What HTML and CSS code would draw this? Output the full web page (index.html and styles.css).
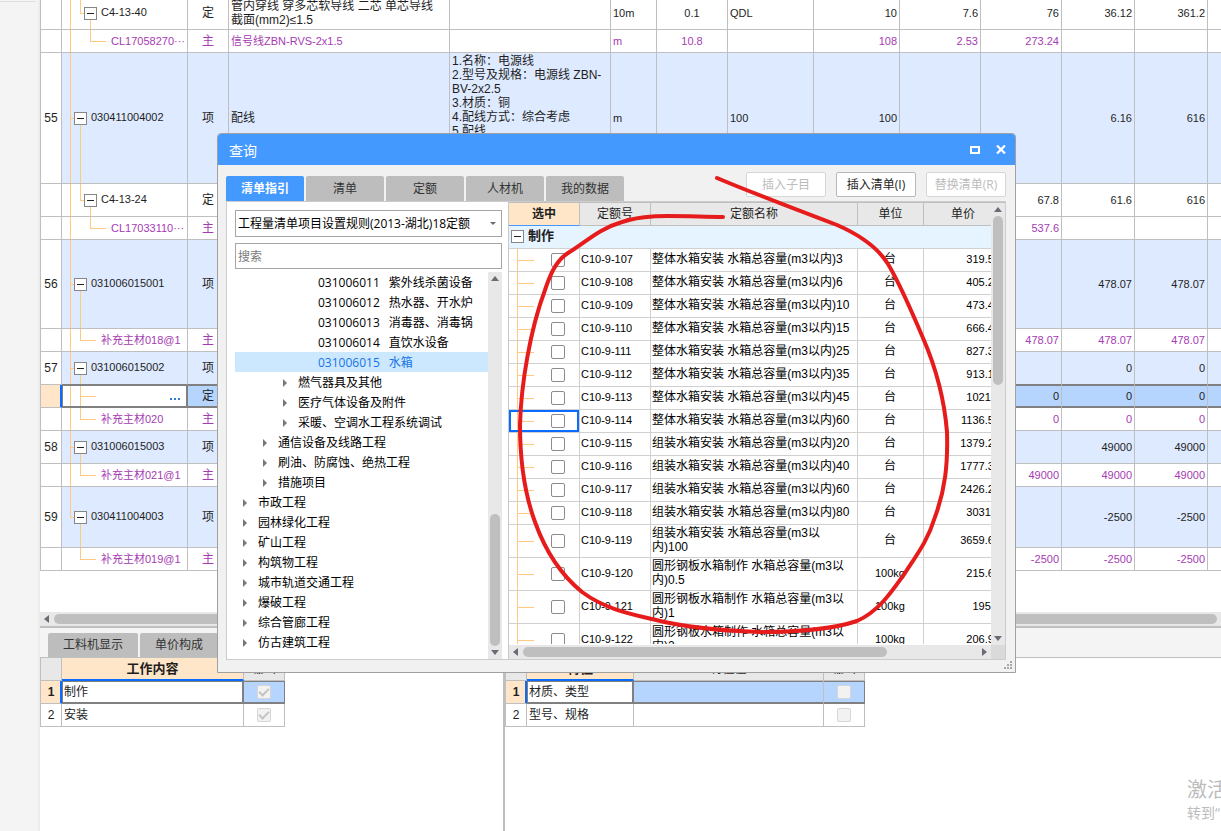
FILE: index.html
```html
<!DOCTYPE html>
<html lang="zh-CN">
<head>
<meta charset="utf-8">
<title>查询</title>
<link rel="stylesheet" href="styles.css">
</head>
<body>
<div class="app">
  <aside class="rail"><hr class="rail-line"></aside>
  <main class="main">
    <section class="bill">
      <table class="grid bill-grid">
        <colgroup><col class="w-no"><col class="w-code"><col class="w-type"><col class="w-name"><col class="w-desc"><col class="w-unit"><col class="w-content"><col class="w-expr"><col class="w-expr"><col class="w-price"><col class="w-price"><col class="w-sum"><col class="w-sum"><col class="w-sum"></colgroup>
        <tbody>
        <tr class="h33"><td class="no"></td><td class="tree n1"><button class="fold" aria-label="折叠"></button>C4-13-40</td><td class="c">定</td><td class="zh">管内穿线 穿多芯软导线 二芯 单芯导线<br>截面(mm2)≤1.5</td><td></td><td>10m</td><td class="c num">0.1</td><td>QDL</td><td class="r">10</td><td class="r">7.6</td><td class="r">76</td><td class="r">36.12</td><td class="r">361.2</td><td></td></tr>
        <tr class="h23 main-mat"><td class="no"></td><td class="tree l2">CL17058270···</td><td class="c">主</td><td>信号线ZBN-RVS-2x1.5</td><td></td><td>m</td><td class="c num">10.8</td><td></td><td class="r">108</td><td class="r">2.53</td><td class="r">273.24</td><td></td><td></td><td></td></tr>
        <tr class="h131 item"><td class="no">55</td><td class="tree n0"><button class="fold" aria-label="折叠"></button>030411004002</td><td class="c">项</td><td class="zh">配线</td><td class="zh top">1.名称：电源线<br>2.型号及规格：电源线 ZBN-<br>BV-2x2.5<br>3.材质：铜<br>4.配线方式：综合考虑<br>5.配线</td><td>m</td><td></td><td>100</td><td class="r">100</td><td></td><td></td><td class="r">6.16</td><td class="r">616</td><td></td></tr>
        <tr class="h33"><td class="no"></td><td class="tree n1"><button class="fold" aria-label="折叠"></button>C4-13-24</td><td class="c">定</td><td></td><td></td><td></td><td></td><td></td><td></td><td></td><td class="r">67.8</td><td class="r">61.6</td><td class="r">616</td><td></td></tr>
        <tr class="h23 main-mat"><td class="no"></td><td class="tree l2">CL17033110···</td><td class="c">主</td><td></td><td></td><td></td><td></td><td></td><td></td><td></td><td class="r">537.6</td><td></td><td></td><td></td></tr>
        <tr class="h89 item"><td class="no">56</td><td class="tree n0"><button class="fold" aria-label="折叠"></button>031006015001</td><td class="c">项</td><td></td><td></td><td></td><td></td><td></td><td></td><td></td><td></td><td class="r">478.07</td><td class="r">478.07</td><td></td></tr>
        <tr class="h23 main-mat"><td class="no"></td><td class="tree l1">补充主材018@1</td><td class="c">主</td><td></td><td></td><td></td><td></td><td></td><td></td><td></td><td class="r">478.07</td><td class="r">478.07</td><td class="r">478.07</td><td></td></tr>
        <tr class="h33 item above"><td class="no">57</td><td class="tree n0"><button class="fold" aria-label="折叠"></button>031006015002</td><td class="c">项</td><td></td><td></td><td></td><td></td><td></td><td></td><td></td><td></td><td class="r">0</td><td class="r">0</td><td></td></tr>
        <tr class="h23 current"><td class="no"></td><td class="tree l1 mid edit"><button class="more" aria-label="更多"><svg width="10" height="2" viewBox="0 0 10 2" fill="#2c7fd0"><path d="M0 0h2v2h-2zM4 0h2v2h-2zM8 0h2v2h-2z"/></svg></button></td><td class="c">定</td><td></td><td></td><td></td><td></td><td></td><td></td><td></td><td class="r">0</td><td class="r">0</td><td class="r">0</td><td></td></tr>
        <tr class="h23 main-mat"><td class="no"></td><td class="tree l1">补充主材020</td><td class="c">主</td><td></td><td></td><td></td><td></td><td></td><td></td><td></td><td class="r">0</td><td class="r">0</td><td class="r">0</td><td></td></tr>
        <tr class="h33 item"><td class="no">58</td><td class="tree n0"><button class="fold" aria-label="折叠"></button>031006015003</td><td class="c">项</td><td></td><td></td><td></td><td></td><td></td><td></td><td></td><td></td><td class="r">49000</td><td class="r">49000</td><td></td></tr>
        <tr class="h23 main-mat"><td class="no"></td><td class="tree l1">补充主材021@1</td><td class="c">主</td><td></td><td></td><td></td><td></td><td></td><td></td><td></td><td class="r">49000</td><td class="r">49000</td><td class="r">49000</td><td></td></tr>
        <tr class="h61 item"><td class="no">59</td><td class="tree n0 last"><button class="fold" aria-label="折叠"></button>030411004003</td><td class="c">项</td><td></td><td></td><td></td><td></td><td></td><td></td><td></td><td></td><td class="r">-2500</td><td class="r">-2500</td><td></td></tr>
        <tr class="h23 main-mat"><td class="no"></td><td class="tree l1 end">补充主材019@1</td><td class="c">主</td><td></td><td></td><td></td><td></td><td></td><td></td><td></td><td class="r">-2500</td><td class="r">-2500</td><td class="r">-2500</td><td></td></tr>
        </tbody>
      </table>
    </section>
    <div class="hbar bill-bar"><i class="arrow left"></i><span class="thumb"></span></div>
    <nav class="sub-tabs"><button class="sub-tab">工料机显示</button><button class="sub-tab">单价构成</button></nav>
    <section class="split">
      <div class="pane work">
        <table class="grid detail">
          <colgroup><col class="w-no"><col class="w-work"><col class="w-out"></colgroup>
          <thead><tr><th></th><th class="active">工作内容</th><th>输出</th></tr></thead>
          <tbody>
          <tr class="picked"><td class="no">1</td><td class="focus">制作</td><td class="c"><input type="checkbox" class="box" aria-label="输出 制作" checked disabled></td></tr>
          <tr><td class="no">2</td><td>安装</td><td class="c"><input type="checkbox" class="box" aria-label="输出 安装" checked disabled></td></tr>
          </tbody>
        </table>
      </div>
      <div class="pane">
        <table class="grid detail">
          <colgroup><col class="w-no"><col class="w-feature"><col class="w-value"><col class="w-out"></colgroup>
          <thead><tr><th></th><th class="active">特征</th><th>特征值</th><th>输出</th></tr></thead>
          <tbody>
          <tr class="picked"><td class="no">1</td><td class="focus">材质、类型</td><td></td><td class="c"><input type="checkbox" class="box" aria-label="输出 材质、类型" disabled></td></tr>
          <tr><td class="no">2</td><td>型号、规格</td><td></td><td class="c"><input type="checkbox" class="box" aria-label="输出 型号、规格" disabled></td></tr>
          </tbody>
        </table>
      </div>
    </section>
  </main>

  <div class="notice"><p class="notice-title">激活</p><p class="notice-text">转到“</p></div>

  <div class="dialog" role="dialog" aria-labelledby="dlg-title">
    <header class="title-bar">
      <h1 id="dlg-title">查询</h1>
      <button class="win-btn" aria-label="最大化"><svg width="10" height="8" viewBox="0 0 10 8"><rect x="1" y="1" width="8" height="6" fill="none" stroke="#fff" stroke-width="2"/></svg></button>
      <button class="win-btn" aria-label="关闭"><svg width="10" height="9" viewBox="0 0 10 9"><path d="M1 0.500L9 8.500M9 0.500L1 8.500" stroke="#fff" stroke-width="2.200"/></svg></button>
    </header>
    <div class="tool-row">
      <nav class="tabs"><button class="tab on">清单指引</button><button class="tab">清单</button><button class="tab">定额</button><button class="tab">人材机</button><button class="tab">我的数据</button></nav>
      <div class="actions"><button class="btn" disabled>插入子目</button><button class="btn">插入清单(I)</button><button class="btn" disabled>替换清单(R)</button></div>
    </div>
    <div class="content">
      <div class="guide">
        <div class="picker"><select aria-label="清单规则"><option>工程量清单项目设置规则(2013-湖北)18定额</option></select><i class="arrow down small"></i></div>
        <input type="text" class="search" placeholder="搜索" aria-label="搜索">
        <div class="tree-box">
          <ul class="nodes">
            <li class="leaf"><span>031006011</span>紫外线杀菌设备</li>
            <li class="leaf"><span>031006012</span>热水器、开水炉</li>
            <li class="leaf"><span>031006013</span>消毒器、消毒锅</li>
            <li class="leaf"><span>031006014</span>直饮水设备</li>
            <li class="leaf chosen"><span>031006015</span>水箱</li>
            <li class="d3"><i class="arrow right"></i>燃气器具及其他</li>
            <li class="d3"><i class="arrow right"></i>医疗气体设备及附件</li>
            <li class="d3"><i class="arrow right"></i>采暖、空调水工程系统调试</li>
            <li class="d2"><i class="arrow right"></i>通信设备及线路工程</li>
            <li class="d2"><i class="arrow right"></i>刷油、防腐蚀、绝热工程</li>
            <li class="d2"><i class="arrow right"></i>措施项目</li>
            <li class="d1"><i class="arrow right"></i>市政工程</li>
            <li class="d1"><i class="arrow right"></i>园林绿化工程</li>
            <li class="d1"><i class="arrow right"></i>矿山工程</li>
            <li class="d1"><i class="arrow right"></i>构筑物工程</li>
            <li class="d1"><i class="arrow right"></i>城市轨道交通工程</li>
            <li class="d1"><i class="arrow right"></i>爆破工程</li>
            <li class="d1"><i class="arrow right"></i>综合管廊工程</li>
            <li class="d1"><i class="arrow right"></i>仿古建筑工程</li>
          </ul>
          <div class="vbar guide-bar"><i class="arrow up"></i><span class="thumb"></span><i class="arrow down"></i></div>
        </div>
      </div>
      <div class="quota">
        <div class="quota-view">
          <table class="grid quota-grid">
            <colgroup><col class="q-pick"><col class="q-code"><col class="q-name"><col class="q-unit"><col class="q-price"></colgroup>
            <thead><tr><th class="active">选中</th><th>定额号</th><th>定额名称</th><th>单位</th><th>单价</th></tr></thead>
            <tbody>
            <tr class="group"><td colspan="5"><div class="group-head"><button class="fold" aria-label="折叠"></button>制作</div></td></tr>
            <tr class="h23"><td class="pick"><input type="checkbox" class="box" aria-label="C10-9-107"></td><td>C10-9-107</td><td class="zh">整体水箱安装 水箱总容量(m3以内)3</td><td class="c zh">台</td><td class="r">319.50</td></tr>
            <tr class="h23"><td class="pick"><input type="checkbox" class="box" aria-label="C10-9-108"></td><td>C10-9-108</td><td class="zh">整体水箱安装 水箱总容量(m3以内)6</td><td class="c zh">台</td><td class="r">405.20</td></tr>
            <tr class="h23"><td class="pick"><input type="checkbox" class="box" aria-label="C10-9-109"></td><td>C10-9-109</td><td class="zh">整体水箱安装 水箱总容量(m3以内)10</td><td class="c zh">台</td><td class="r">473.40</td></tr>
            <tr class="h23"><td class="pick"><input type="checkbox" class="box" aria-label="C10-9-110"></td><td>C10-9-110</td><td class="zh">整体水箱安装 水箱总容量(m3以内)15</td><td class="c zh">台</td><td class="r">666.40</td></tr>
            <tr class="h23"><td class="pick"><input type="checkbox" class="box" aria-label="C10-9-111"></td><td>C10-9-111</td><td class="zh">整体水箱安装 水箱总容量(m3以内)25</td><td class="c zh">台</td><td class="r">827.30</td></tr>
            <tr class="h23"><td class="pick"><input type="checkbox" class="box" aria-label="C10-9-112"></td><td>C10-9-112</td><td class="zh">整体水箱安装 水箱总容量(m3以内)35</td><td class="c zh">台</td><td class="r">913.10</td></tr>
            <tr class="h23"><td class="pick"><input type="checkbox" class="box" aria-label="C10-9-113"></td><td>C10-9-113</td><td class="zh">整体水箱安装 水箱总容量(m3以内)45</td><td class="c zh">台</td><td class="r">1021.4</td></tr>
            <tr class="h23"><td class="pick cursor"><input type="checkbox" class="box" aria-label="C10-9-114"></td><td>C10-9-114</td><td class="zh">整体水箱安装 水箱总容量(m3以内)60</td><td class="c zh">台</td><td class="r">1136.50</td></tr>
            <tr class="h23"><td class="pick"><input type="checkbox" class="box" aria-label="C10-9-115"></td><td>C10-9-115</td><td class="zh">组装水箱安装 水箱总容量(m3以内)20</td><td class="c zh">台</td><td class="r">1379.20</td></tr>
            <tr class="h23"><td class="pick"><input type="checkbox" class="box" aria-label="C10-9-116"></td><td>C10-9-116</td><td class="zh">组装水箱安装 水箱总容量(m3以内)40</td><td class="c zh">台</td><td class="r">1777.30</td></tr>
            <tr class="h23"><td class="pick"><input type="checkbox" class="box" aria-label="C10-9-117"></td><td>C10-9-117</td><td class="zh">组装水箱安装 水箱总容量(m3以内)60</td><td class="c zh">台</td><td class="r">2426.20</td></tr>
            <tr class="h23"><td class="pick"><input type="checkbox" class="box" aria-label="C10-9-118"></td><td>C10-9-118</td><td class="zh">组装水箱安装 水箱总容量(m3以内)80</td><td class="c zh">台</td><td class="r">3031.4</td></tr>
            <tr class="h33"><td class="pick"><input type="checkbox" class="box" aria-label="C10-9-119"></td><td>C10-9-119</td><td class="zh">组装水箱安装 水箱总容量(m3以<br>内)100</td><td class="c zh">台</td><td class="r">3659.60</td></tr>
            <tr class="h33"><td class="pick"><input type="checkbox" class="box" aria-label="C10-9-120"></td><td>C10-9-120</td><td class="zh">圆形钢板水箱制作 水箱总容量(m3以<br>内)0.5</td><td class="c num">100kg</td><td class="r">215.60</td></tr>
            <tr class="h33"><td class="pick"><input type="checkbox" class="box" aria-label="C10-9-121"></td><td>C10-9-121</td><td class="zh">圆形钢板水箱制作 水箱总容量(m3以<br>内)1</td><td class="c num">100kg</td><td class="r">195.4</td></tr>
            <tr class="h33"><td class="pick"><input type="checkbox" class="box" aria-label="C10-9-122"></td><td>C10-9-122</td><td class="zh">圆形钢板水箱制作 水箱总容量(m3以<br>内)2</td><td class="c num">100kg</td><td class="r">206.90</td></tr>
            </tbody>
          </table>
        </div>
        <div class="vbar"><i class="arrow up"></i><span class="thumb"></span><i class="arrow down"></i></div>
        <div class="hbar"><i class="arrow left"></i><span class="thumb"></span><i class="arrow right"></i></div>
        <div class="corner"></div>
      </div>
    </div>
    <footer class="dialog-foot"><svg width="9" height="9" viewBox="0 0 9 9" fill="#a8a8a8"><path d="M6 0h2v2h-2zM3 3h2v2h-2zM6 3h2v2h-2zM0 6h2v2h-2zM3 6h2v2h-2zM6 6h2v2h-2z"/></svg></footer>
  </div>

  <svg class="markup" width="1221" height="831" viewBox="0 0 1221 831"><path d="M717 178C750 192 800 211 837 225C860 235 878 248 888 264C900 284 912 312 923 338C933 361 944 395 947 432C948 465 945 490 935 517C928 540 918 553 905 573C894 588 880 611 857 621C830 630 795 632 760 632C730 631 690 629 652 619C630 614 605 609 582 592C560 574 545 550 535 522C524 492 520 460 520 425C521 385 530 330 545 290C549 278 555 261 568 253C585 243 598 229 622 222C645 214 665 216 723 217" fill="none" stroke="#e61c1c" stroke-width="4" stroke-linecap="round" stroke-linejoin="round"/></svg>
</div>
</body>
</html>
```
FILE: styles.css
```css
* { box-sizing: border-box; }

body {
  margin: 0;
  overflow: hidden;
  background: #fff;
  color: #1e1e1e;
  font: 12px/14px "Open Sans", "Noto Sans CJK SC", sans-serif;
}

button, input, select { margin: 0; padding: 0; font: inherit; color: inherit; }
h1, p, ul { margin: 0; padding: 0; font-weight: normal; }
li { list-style: none; }

.app { position: relative; display: flex; min-height: 100vh; overflow: hidden; }

.rail { flex: 0 0 40px; border-right: 2px solid #ececec; background: #f4f4f4; }
.rail-line { margin: 1px 2px 0 0; border: 0; border-top: 1px solid #dedede; }

.main { flex: 1; min-width: 0; display: flex; flex-direction: column; }

/* Data grids */
.grid {
  table-layout: fixed;
  border-spacing: 0;
  font: 11px/14px "Liberation Sans", "Noto Sans CJK SC", sans-serif;
}
.grid td, .grid th {
  padding: 0 2px;
  border: 0 solid #bfbfbf;
  border-width: 0 1px 1px 0;
  text-align: left;
  white-space: nowrap;
  overflow: hidden;
}
.grid .zh, .grid .c, .grid .no { font-size: 12px; }
.grid .c, .grid .no { text-align: center; }
.grid .num { font-size: 11px; }
.grid .r { text-align: right; }
.grid .top { vertical-align: top; padding-top: 1px; }
.h23 { height: 23px; }
.h33 { height: 33px; }
.h61 { height: 61px; }
.h89 { height: 89px; }
.h131 { height: 131px; }

/* Bill of quantities */
.bill { overflow: hidden; padding-bottom: 41px; }
.bill-grid { width: 1240px; margin-top: -3px; border-left: 1px solid #bfbfbf; }
.bill-grid td { padding-bottom: 1px; }
.w-no { width: 21px; }
.w-code { width: 126px; }
.w-type { width: 41px; }
.w-name { width: 221px; }
.w-desc { width: 161px; }
.w-unit { width: 46px; }
.w-content { width: 71px; }
.w-expr { width: 86px; }
.w-price { width: 81px; }
.w-sum { width: 73px; }
.main-mat { color: #a63bb3; }
.item { background: #deeaff; }
.grid td.no { padding: 0; background: #fff; color: #1e1e1e; }
.above td:not(.no) { border-bottom-color: #808080; }
.current td { background-color: #b5d5ff; border-bottom-color: #808080; box-shadow: inset 0 1px #808080, inset 0 -1px #808080; }
.current td.edit { background-color: #fff; box-shadow: inset 1px 1px #808080, inset -1px -1px #808080; border-right-color: #808080; text-align: right; }
.grid .current td.no { background: #ffe6c8; border-bottom-color: #bfbfbf; border-right-color: #0a6cff; box-shadow: inset -1px 0 #0a6cff; }
.more { border: 0; background: none; padding-right: 5px; vertical-align: middle; line-height: 4px; }

/* Tree connectors are drawn as strips behind the code text */
.tree {
  --line: linear-gradient(#ffc97f, #ffc97f);
  background-repeat: no-repeat;
}
.n0, .n1 { background-image: var(--line), var(--line), var(--line), var(--line); }
.grid .n0 {
  padding-left: 12px;
  background-position: 8px 0, 8px 50%, 18px 100%, 0 0;
  background-size: 1px 100%, 4px 1px, 1px 50%, 0 0;
}
.grid .n0.last { background-size: 1px 50%, 4px 1px, 1px 50%, 0 0; }
.grid .n1 {
  padding-left: 22px;
  background-position: 8px 0, 18px 0, 18px 50%, 28px 100%;
  background-size: 1px 100%, 1px 50%, 4px 1px, 1px 50%;
}
.l1, .l2 { background-image: var(--line), var(--line), var(--line); }
.grid .l1 {
  padding-left: 39px;
  background-position: 8px 0, 18px 0, 18px 50%;
  background-size: 1px 100%, 1px 50%, 16px 1px;
}
.grid .l1.mid { background-size: 1px 100%, 1px 100%, 16px 1px; }
.grid .l1.end { background-size: 0 0, 1px 50%, 16px 1px; }
.grid .l2 {
  padding-left: 49px;
  background-position: 8px 0, 28px 0, 28px 50%;
  background-size: 1px 100%, 1px 50%, 16px 1px;
}
.fold {
  width: 13px;
  height: 13px;
  margin-right: 4px;
  border: 1px solid #868686;
  background: linear-gradient(#222, #222) center / 7px 1px no-repeat #fff;
  vertical-align: middle;
}

/* Scroll bars */
.hbar, .vbar { display: flex; align-items: center; background: #e8e8e8; }
.hbar { height: 14px; padding: 0 4px; }
.vbar { flex-direction: column; width: 14px; padding: 4px 0; }
.thumb { border-radius: 5px; background: #bfbfbf; }
.hbar .thumb { height: 10px; }
.vbar .thumb { width: 10px; }
.arrow { flex: none; border: 0 solid transparent; }
.arrow.left { border-width: 4px 5px 4px 0; border-right-color: #6b6b75; }
.arrow.right { border-width: 4px 0 4px 5px; border-left-color: #6b6b75; }
.arrow.up { border-width: 0 4px 5px; border-bottom-color: #6b6b75; }
.arrow.down { border-width: 5px 4px 0; border-top-color: #6b6b75; }
.arrow.down.small { justify-self: center; border-width: 3px 3px 0; }
.bill-bar .thumb { flex: 1; margin-left: 5px; }

/* Lower tabs and panes */
.sub-tabs {
  display: flex;
  gap: 2px;
  height: 32px;
  padding: 5px 8px 0;
  border-top: 2px solid #bfbfbf;
  border-bottom: 1px solid #bfbfbf;
  background: #f4f4f4;
}
.sub-tab { width: 90px; border: 0; border-radius: 2px 2px 0 0; background: #bdbdbd; color: #333; }
.sub-tab + .sub-tab { width: 78px; }
.split { flex: 1; display: flex; }
.pane { flex: 1; min-width: 0; }
.work { flex: 0 0 465px; border-right: 2px solid #bfbfbf; }
.detail { border-left: 1px solid #bfbfbf; font-size: 12px; width: 245px; }
.pane:last-child .detail { width: 360px; }
.w-work { width: 182px; }
.w-feature { width: 107px; }
.w-value { width: 190px; }
.w-out { width: 41px; }
.detail tr { height: 23px; }
.grid th { background: #e8e8e8; text-align: center; font-size: 12px; font-weight: normal; padding: 0; }
.grid th.active { background: #ffe6c8; font-weight: bold; }
.detail th.active { border-bottom: 2px solid #0a6cff; font-size: 13px; }
.grid .picked td { background: #b5d5ff; border-bottom-color: #808080; box-shadow: inset 0 1px #808080, inset 0 -1px #808080; }
.grid .picked td:last-child { border-right-color: #808080; }
.grid .picked td.focus { background: #fff; border-right-color: #808080; box-shadow: inset 1px 1px #808080, inset -1px -1px #808080; }
.grid .picked td.no { background: #ffe6c8; border-bottom-color: #bfbfbf; border-right-color: #0a6cff; font-weight: bold; box-shadow: inset -1px 0 #0a6cff; }

.box {
  appearance: none;
  display: inline-grid;
  place-items: center;
  width: 14px;
  height: 14px;
  border: 1px solid #8c8c8c;
  border-radius: 2px;
  background: #fff;
  vertical-align: middle;
}
.box:disabled { border-color: #d6d6d6; background: #f2f2f2; }
.box:checked::before {
  content: "";
  width: 8px;
  height: 4px;
  margin-bottom: 3px;
  border: solid #c4c4c4;
  border-width: 0 0 2px 2px;
  transform: rotate(-45deg);
}

.notice { position: absolute; left: 1187px; bottom: 8px; color: #bcbcbc; white-space: nowrap; }
.notice-title { font-size: 20px; line-height: 26px; }
.notice-text { font-size: 14px; line-height: 20px; }

/* Query window */
.dialog {
  position: absolute;
  inset: 133px 205px 158px 217px;
  display: flex;
  flex-direction: column;
  border: 1px solid #a0a0a0;
  border-radius: 4px 4px 0 0;
  background: #f1f1f1;
  overflow: hidden;
}
.title-bar { display: flex; align-items: center; gap: 16px; height: 31px; padding: 0 9px 0 11px; background: #4499ff; color: #fff; }
.title-bar h1 { flex: 1; padding-top: 2px; font-size: 14px; line-height: 18px; }
.win-btn { display: grid; border: 0; background: none; }
.tool-row { display: flex; justify-content: space-between; height: 36px; padding: 0 9px 0 8px; }
.tabs { display: flex; gap: 2px; padding-top: 11px; }
.tab { width: 78px; border: 0; border-radius: 2px 2px 0 0; background: #bdbdbd; color: #333; }
.tab.on { background: #4499ff; color: #fff; font-weight: bold; }
.actions { display: flex; gap: 10px; padding: 7px 0 4px; }
.btn { width: 80px; border: 1px solid #b8b8b8; border-radius: 2px; background: #fff; }
.btn:disabled { border-color: #d6d6d6; color: #bcbcbc; }

.content { flex: 1; min-height: 0; display: flex; margin: 0 9px 0 8px; border: 1px solid #ccc; background: #fff; }
.guide { flex: 0 0 281px; display: flex; flex-direction: column; padding: 8px 6px 0 8px; color: #000; }
.picker { display: grid; grid-template-columns: minmax(0, 1fr) 16px; align-items: center; height: 27px; border: 1px solid #a6a6a6; }
.picker select { appearance: none; height: 25px; padding: 0 2px; border: 0; background: none; white-space: nowrap; }
.search { height: 26px; margin: 6px 0 3px; padding: 0 2px; border: 1px solid #a6a6a6; background: #fff; }
.search::placeholder { color: #7a7a7a; }
.tree-box { flex: 1; min-height: 0; display: flex; }
.nodes { flex: 1; line-height: 18px; }
.nodes li { display: flex; align-items: center; height: 20px; padding-top: 2px; white-space: nowrap; }
.nodes .arrow { margin-right: 11px; border-width: 4px 0 4px 4px; border-left-color: #777; }
.nodes .leaf { padding-left: 83px; }
.leaf span { margin-right: 9px; }
.chosen { background: #cce8ff; color: #1473e6; }
.d1 { padding-left: 8px; }
.d2 { padding-left: 28px; }
.d3 { padding-left: 48px; }
.guide-bar .thumb { height: 132px; margin: auto 0 4px; }

.quota {
  flex: 1;
  min-width: 0;
  display: grid;
  grid-template: minmax(0, 1fr) 14px / minmax(0, 1fr) 14px;
  border-left: 1px solid #c8c8c8;
  border-top: 1px solid #bfbfbf;
}
.quota-view { overflow: hidden; margin-bottom: 1px; color: #000; }
.quota-grid { width: 494px; }
.grid.quota-grid td { padding-left: 1px; padding-bottom: 2px; border-color: #d0d0d0; }
.q-pick { width: 71px; }
.q-code { width: 71px; }
.q-name { width: 207px; }
.q-unit { width: 66px; }
.q-price { width: 79px; }
.quota-grid th { height: 23px; color: #1e1e1e; }
.grid.quota-grid th.active { border-bottom-color: #4499ff; }
.group td { height: 23px; background: #e6f4ff; }
.group-head { display: flex; align-items: center; padding-left: 1px; font-size: 13px; font-weight: bold; color: #1e1e1e; }
.grid .pick {
  background: linear-gradient(#ffc97f, #ffc97f) 8px 0 / 1px 100% no-repeat,
    linear-gradient(#ffc97f, #ffc97f) 8px 50% / 17px 1px no-repeat;
  text-align: right;
}
.grid.quota-grid td.pick { padding-right: 14px; padding-bottom: 1px; }
.grid .cursor { box-shadow: inset 0 0 0 2px #0a6cff; }
.quota .vbar .thumb { height: 169px; margin: 4px 0 auto; }
.quota .hbar .thumb { width: 364px; margin: 0 auto 0 5px; }
.corner { background: #dadada; }

.dialog-foot { display: flex; justify-content: flex-end; align-items: flex-end; height: 12px; padding: 0 2px 2px; }

.markup { position: absolute; left: 0; top: 0; pointer-events: none; }
```
